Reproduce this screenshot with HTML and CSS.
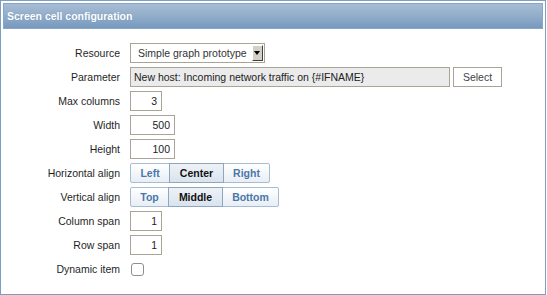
FILE: index.html
```html
<!DOCTYPE html>
<html lang="en">
<head>
  <meta charset="UTF-8" />
  <title>Screen cell configuration</title>
  <link rel="stylesheet" href="styles.css">
</head>
<body>
<div class="frame">
  <div class="header">Screen cell configuration</div>

  <div class="form">
    <label>Resource</label>
    <div class="select">
      <span class="select-text">Simple graph prototype</span>
      <span class="select-arrow"></span>
    </div>

    <label>Parameter</label>
    <div class="row">
      <input type="text" class="param" value="New host: Incoming network traffic on {#IFNAME}" readonly>
      <button class="btn-select">Select</button>
    </div>

    <label>Max columns</label>
    <div><input type="text" class="num w32" value="3"></div>

    <label>Width</label>
    <div><input type="text" class="num w45" value="500"></div>

    <label>Height</label>
    <div><input type="text" class="num w45" value="100"></div>

    <label>Horizontal align</label>
    <div class="buttonset">
      <span class="seg w40">Left</span>
      <span class="seg w55 active">Center</span>
      <span class="seg w47">Right</span>
    </div>

    <label>Vertical align</label>
    <div class="buttonset">
      <span class="seg w39">Top</span>
      <span class="seg w55 active">Middle</span>
      <span class="seg w57">Bottom</span>
    </div>

    <label>Column span</label>
    <div><input type="text" class="num w32" value="1"></div>

    <label>Row span</label>
    <div><input type="text" class="num w32" value="1"></div>

    <label>Dynamic item</label>
    <div><span class="checkbox"></span></div>
  </div>
</div>
</body>
</html>
```

FILE: styles.css
```css
html, body {
  margin: 0;
  background: #fff;
}
body {
  font-family: "Liberation Sans", Arial, sans-serif;
  font-size: 10.5px;
  color: #1f1f1f;
}
.frame {
  width: 546px;
  height: 295px;
  box-sizing: border-box;
  border: 1px solid #7c9ec0;
  padding: 2px;
}
.header {
  height: 26px;
  box-sizing: border-box;
  border: 1px solid #89a6c6;
  background: linear-gradient(#a6bcd4, #94afcb 45%, #7699bf);
  color: #fff;
  font-weight: bold;
  font-size: 10.5px;
  line-height: 24px;
  padding-left: 3px;
  text-shadow: 0 0 1px rgba(60, 90, 130, 0.4);
}
.form {
  display: grid;
  grid-template-columns: 117px 1fr;
  grid-auto-rows: 20px;
  column-gap: 10px;
  row-gap: 4px;
  margin-top: 14px;
}
.form label {
  text-align: right;
  line-height: 20px;
  white-space: nowrap;
}
.row {
  display: flex;
  gap: 3px;
}
input {
  font-family: "Liberation Sans", Arial, sans-serif;
  font-size: 10.5px;
  height: 20px;
  box-sizing: border-box;
  border: 1px solid #aaa397;
  margin: 0;
  padding: 0 4px;
  color: #222;
  outline: none;
}
.num {
  text-align: right;
}
.w32 { width: 32px; }
.w45 { width: 45px; }
.param {
  width: 320px;
  background: #ebebeb;
  padding-left: 3px;
}
.btn-select {
  width: 49px;
  height: 20px;
  font-family: "Liberation Sans", Arial, sans-serif;
  font-size: 10.5px;
  color: #444;
  background: #fff;
  border: 1px solid #aaa397;
  padding: 0;
}
.select {
  width: 135px;
  height: 20px;
  box-sizing: border-box;
  border: 1px solid #aaa397;
  display: flex;
  align-items: center;
  justify-content: space-between;
  padding: 0 1px 0 7px;
  color: #333;
  white-space: nowrap;
}
.select-arrow {
  width: 11px;
  height: 16px;
  box-sizing: border-box;
  background: #d4d0c8;
  border: 1px solid;
  border-color: #fff #404040 #404040 #fff;
  position: relative;
}
.select-arrow::after {
  content: "";
  position: absolute;
  left: 1px;
  top: 5px;
  border-left: 3.5px solid transparent;
  border-right: 3.5px solid transparent;
  border-top: 4px solid #000;
}
.buttonset {
  display: flex;
}
.seg {
  height: 20px;
  box-sizing: border-box;
  border: 1px solid #a7bcd3;
  margin-left: -1px;
  background: linear-gradient(#ffffff, #e8eef6);
  color: #4b77a8;
  font-weight: bold;
  text-align: center;
  line-height: 18px;
}
.seg:first-child {
  margin-left: 0;
  border-radius: 2px 0 0 2px;
}
.seg:last-child {
  border-radius: 0 2px 2px 0;
}
.seg.active {
  background: linear-gradient(#eef2f7, #d9e3ee);
  border-color: #8ea6c0;
  color: #111;
  position: relative;
}
.w39 { width: 39px; }
.w40 { width: 40px; }
.w47 { width: 47px; }
.w55 { width: 55px; }
.w57 { width: 57px; }
.checkbox {
  display: block;
  width: 13px;
  height: 13px;
  box-sizing: border-box;
  border: 1px solid #8f8f8f;
  border-radius: 3px;
  background: #fff;
  margin: 4px 0 0 1px;
}
```
